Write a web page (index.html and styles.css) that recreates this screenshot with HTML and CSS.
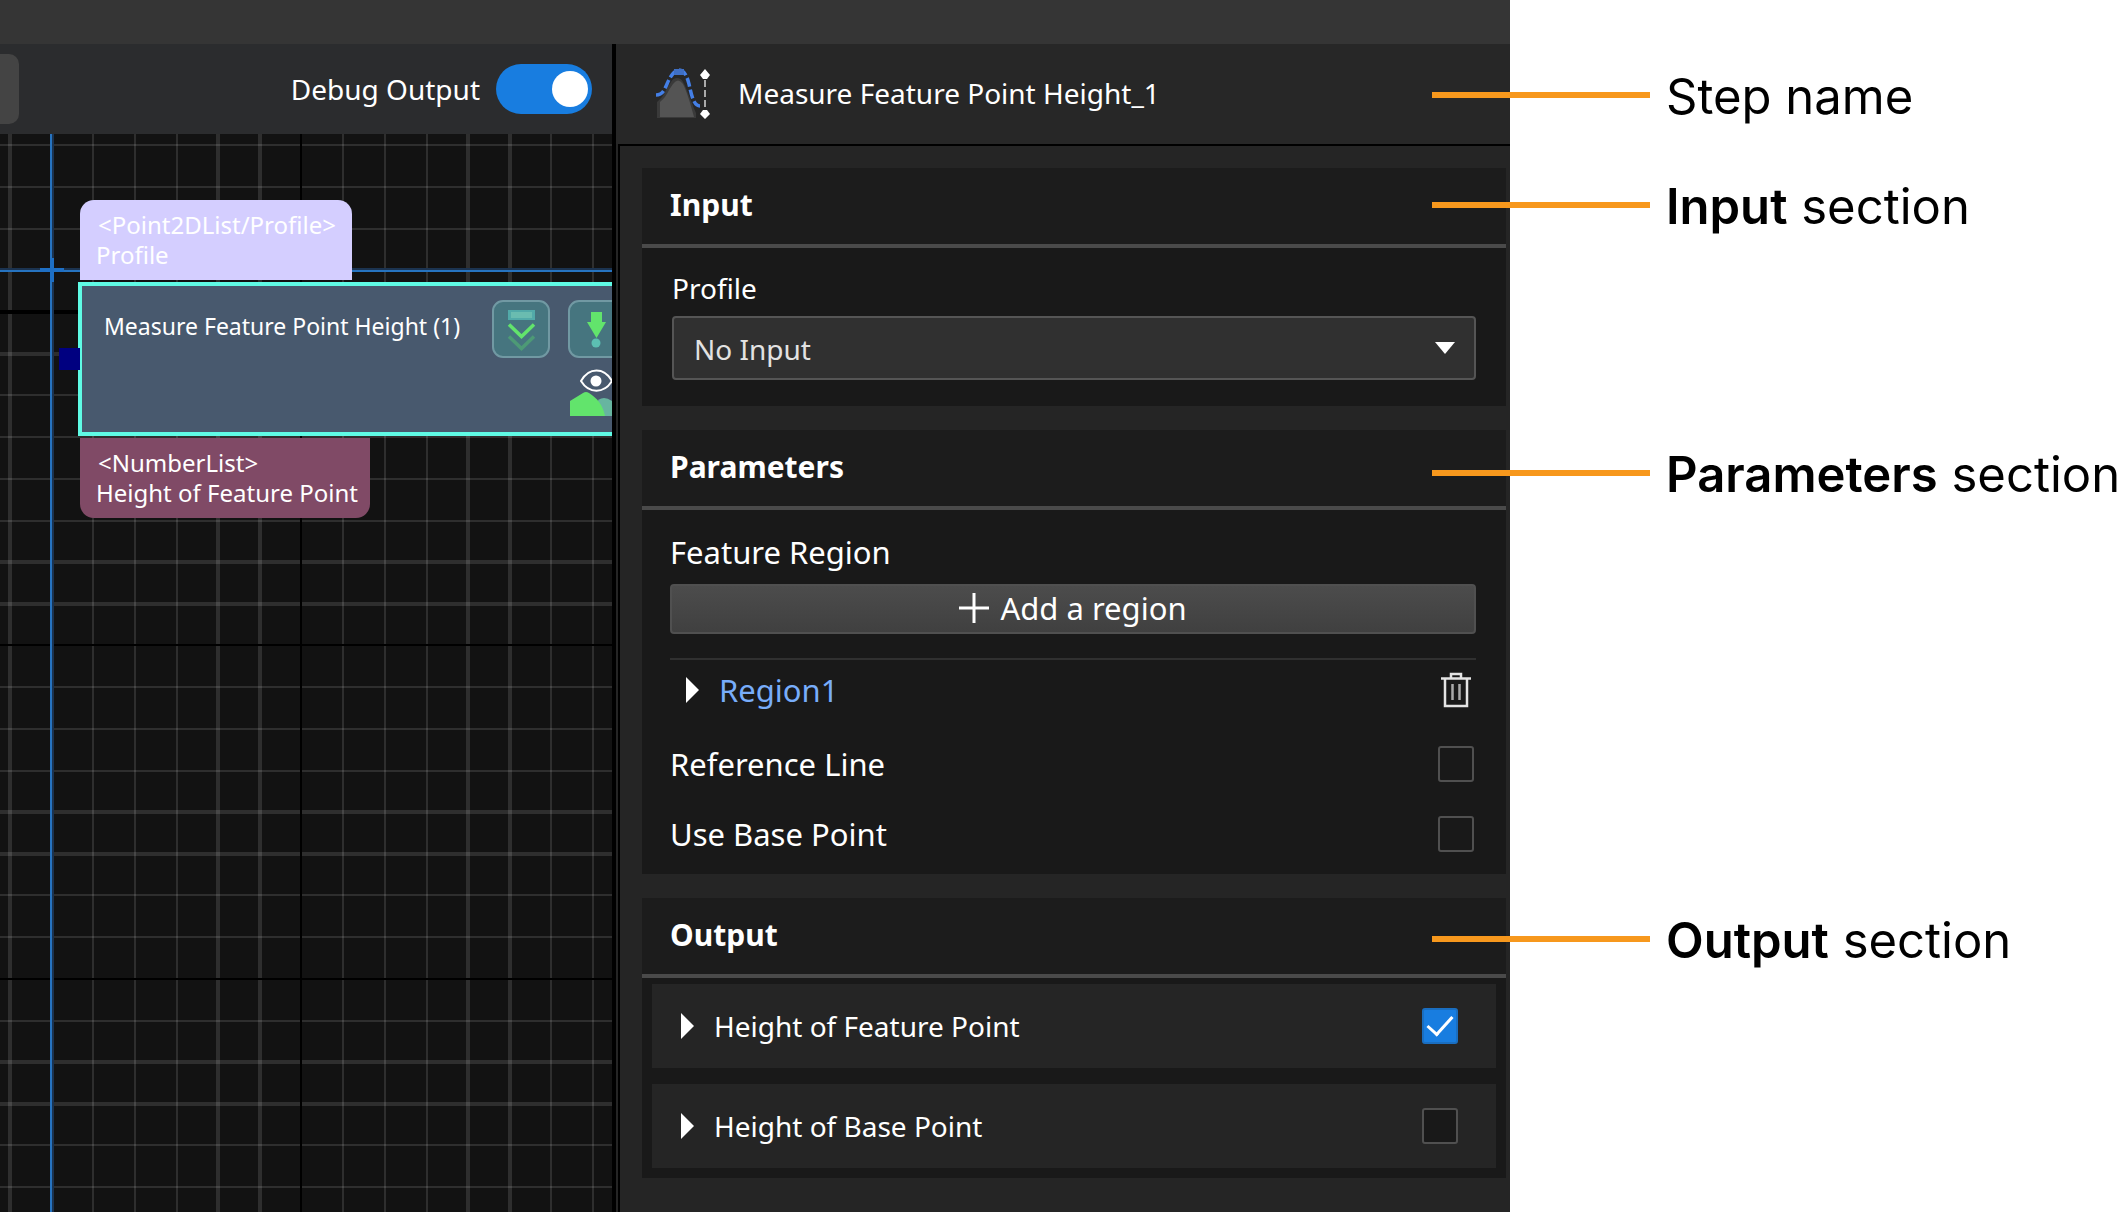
FILE: index.html
```html
<!DOCTYPE html>
<html lang="en">
<head>
<meta charset="utf-8">
<meta name="viewport" content="width=device-width, initial-scale=1">
<title>Measure Feature Point Height</title>
<link rel="stylesheet" href="styles.css">
</head>
<body>
<div class="page">
  <div class="app">
    <div class="titlebar"></div>
    <div class="workspace">
      <section class="graph">
        <div class="toolbar">
          <button class="toolbar-button" type="button" aria-label="More tools"></button>
          <label class="debug">Debug Output <input class="switch" type="checkbox" role="switch" checked></label>
        </div>
        <div class="canvas">
          <svg class="grid" width="2000" height="1600" viewBox="0 134 2000 1600" aria-hidden="true">
            <g fill="#fff" fill-opacity=".12">
              <path d="M8 134h4v1600h-4zM92 134h2v1600h-2zM134 134h2v1600h-2zM176 134h2v1600h-2zM216 134h4v1600h-4zM258 134h4v1600h-4zM342 134h2v1600h-2zM384 134h2v1600h-2zM426 134h2v1600h-2zM466 134h4v1600h-4zM508 134h4v1600h-4zM550 134h2v1600h-2zM592 134h2v1600h-2z"/>
              <path d="M0 144h2000v2H0zM0 186h2000v2H0zM0 228h2000v2H0zM0 352h2000v4H0zM0 394h2000v2H0zM0 436h2000v2H0zM0 478h2000v2H0zM0 520h2000v2H0zM0 560h2000v4H0zM0 602h2000v4H0zM0 686h2000v2H0zM0 728h2000v2H0zM0 770h2000v2H0zM0 810h2000v4H0zM0 852h2000v4H0zM0 894h2000v2H0zM0 936h2000v2H0zM0 1020h2000v2H0zM0 1060h2000v4H0zM0 1102h2000v4H0zM0 1144h2000v2H0zM0 1186h2000v2H0z"/>
            </g>
            <path d="M300 134h2v1600h-2zM0 310h2000v4H0zM0 644h2000v2H0zM0 978h2000v2H0z" fill="#000"/>
            <path d="M52 134h2v1600h-2zM0 268h2000v2H0z" fill="#1b3350"/>
            <path d="M50 134h2v1600h-2zM0 270h2000v2H0z" fill="#2673c0"/>
            <path d="M40 268h24v4H40zM50 258h4v24h-4z" fill="#1e6fc4"/>
          </svg>
          <div class="node-group">
            <div class="port port-in"><span class="port-type">&lt;Point2DList/Profile&gt;</span><span>Profile</span></div>
            <div class="node">
              <span class="node-name">Measure Feature Point Height (1)</span>
              <svg class="node-icons" width="150" height="146" viewBox="482 286 150 146" aria-hidden="true">
                <g fill="#46757f" stroke="#7199a3" stroke-width="2">
                  <rect x="493" y="301" width="56" height="56" rx="10"/>
                  <rect x="569" y="301" width="56" height="56" rx="10"/>
                </g>
                <path d="M508 310h27v10h-27z" fill="#52aaa9"/>
                <path d="M511 312h21v6h-21z" fill="#6abcb0"/>
                <path d="M509 324.500l12.500 12 12.500-12" fill="none" stroke="#62e46c" stroke-width="3.500"/>
                <path d="M509 336.500l12.500 12 12.500-12" fill="none" stroke="#4d9a76" stroke-width="3.500"/>
                <path d="M591 312h11v10h4l-9.500 16-9.500-16h4z" fill="#62e46c"/>
                <circle cx="596" cy="343" r="4.500" fill="#5cbfb2"/>
                <path d="M581 381c8-14 23-14 31 0-8 13-23 13-31 0z" fill="none" stroke="#fff" stroke-width="2"/>
                <circle cx="596" cy="381" r="5.500" fill="#fff"/>
                <path d="M596 404q2-6 8-6t14 8v10h-18z" fill="#67b5a0"/>
                <path d="M570 416v-15l13-8q3-2 6 0c8 5 14 12 16 23z" fill="#62e46c"/>
              </svg>
            </div>
            <div class="port port-out"><span class="port-type">&lt;NumberList&gt;</span><span>Height of Feature Point</span></div>
            <i class="handle"></i>
          </div>
        </div>
      </section>

      <section class="panel">
        <header class="step">
          <svg width="56" height="52" viewBox="0 0 56 52" aria-hidden="true">
            <path d="M1 50V34q6-5 9-12l5-8q2-4 6-4t6 4c4 7 7 17 13 31v5z" fill="#3a3a3a"/>
            <path d="M4 49V34q6-5 9-12l4-6q5-7 10 0c4 8 7 18 11 33z" fill="#545454"/>
            <path d="M0 27c6 0 8-4 11-11s7-14 12-14 8 6 10 14 4 22 11 22" fill="none" stroke="#447fe6" stroke-width="3.500" stroke-dasharray="9 3"/>
            <path d="M18 1h10v6H18z" fill="#3f6fc4"/>
            <path d="M49 12v29" stroke="#aaa" stroke-width="2" stroke-dasharray="7 3"/>
            <path d="M49 1l5 6-3 4h-4l-3-4zM49 51l5-5-3-4h-4l-3 4z" fill="#fff"/>
          </svg>
          <h1 class="step-name">Measure Feature Point Height_1</h1>
        </header>

        <div class="sections">
          <section class="card">
            <h2 class="card-title">Input</h2>
            <div class="card-body input-body">
              <label class="field-label" for="profile">Profile</label>
              <div class="select-wrap">
                <select class="select" id="profile"><option>No Input</option></select>
                <svg class="caret" width="20" height="12" viewBox="0 0 20 12" aria-hidden="true"><path d="M0 0h20L10 12z" fill="#fff"/></svg>
              </div>
            </div>
          </section>

          <section class="card">
            <h2 class="card-title">Parameters</h2>
            <div class="card-body params-body">
              <div class="field-label">Feature Region</div>
              <button class="add" type="button">
                <svg width="30" height="30" viewBox="0 0 30 30" aria-hidden="true"><path d="M0 15h30M15 0v30" stroke="#fff" stroke-width="3"/></svg>
                Add a region
              </button>
              <div class="region">
                <svg class="arrow" width="14" height="26" viewBox="0 0 14 26" aria-hidden="true"><path d="M1 0l13 13L1 26z" fill="#fff"/></svg>
                <a class="region-name" href="#region1">Region1</a>
                <button class="trash" type="button" aria-label="Delete Region1">
                  <svg width="32" height="36" viewBox="0 0 32 36" aria-hidden="true"><g fill="none" stroke="#e4e4e4" stroke-width="2.500"><path d="M1 6.500h30M11 6V2h10v4M5 7v27h22V7"/><path d="M12.500 12v16M19.500 12v16" stroke="#aaa"/></g></svg>
                </button>
              </div>
              <label class="check-row">Reference Line <input class="check" type="checkbox"></label>
              <label class="check-row">Use Base Point <input class="check" type="checkbox"></label>
            </div>
          </section>

          <section class="card">
            <h2 class="card-title">Output</h2>
            <div class="card-body output-body">
              <label class="output">
                <svg class="arrow" width="14" height="26" viewBox="0 0 14 26" aria-hidden="true"><path d="M1 0l13 13L1 26z" fill="#fff"/></svg>
                <span>Height of Feature Point</span>
                <input class="check" type="checkbox" checked>
              </label>
              <label class="output">
                <svg class="arrow" width="14" height="26" viewBox="0 0 14 26" aria-hidden="true"><path d="M1 0l13 13L1 26z" fill="#fff"/></svg>
                <span>Height of Base Point</span>
                <input class="check" type="checkbox">
              </label>
            </div>
          </section>
        </div>
      </section>
    </div>
  </div>

  <aside class="notes">
    <p class="note note-step"><span>Step name</span></p>
    <p class="note note-input"><span><b>Input</b> section</span></p>
    <p class="note note-params"><span><b>Parameters</b> section</span></p>
    <p class="note note-output"><span><b>Output</b> section</span></p>
  </aside>
</div>
</body>
</html>
```

FILE: styles.css
```css
* {
  box-sizing: border-box;
}

body {
  margin: 0;
  background: #fff;
  color: #fff;
  font: 28px/40px "Noto Sans", "Open Sans", sans-serif;
}

h1,
h2,
p {
  margin: 0;
}

.page {
  display: grid;
  grid-template-columns: minmax(0, 1510fr) minmax(0, 614fr);
  min-height: 100vh;
  overflow: hidden;
}

.app {
  display: flex;
  flex-direction: column;
  background: #252525;
}

.titlebar {
  height: 44px;
  background: #353535;
}

.workspace {
  flex: 1;
  display: grid;
  grid-template-columns: minmax(0, 612fr) minmax(0, 898fr);
}

/* Graph editor */

.graph {
  display: flex;
  flex-direction: column;
  background: #121212;
}

.toolbar {
  display: flex;
  align-items: center;
  justify-content: space-between;
  height: 90px;
  padding-right: 20px;
  background: #2b2c2e;
}

.toolbar-button {
  width: 19px;
  height: 70px;
  padding: 0;
  border: 0;
  border-radius: 0 10px 10px 0;
  background: #444;
}

.debug {
  display: flex;
  align-items: center;
  gap: 16px;
}

.switch {
  appearance: none;
  display: flex;
  align-items: center;
  justify-content: flex-end;
  width: 96px;
  height: 50px;
  margin: 0;
  padding-right: 4px;
  border-radius: 25px;
  background: #187de0;
}

.switch::before {
  content: "";
  width: 36px;
  height: 36px;
  border-radius: 50%;
  background: #fff;
}

.switch:not(:checked) {
  justify-content: flex-start;
  padding-left: 4px;
  background: #555;
}

.canvas {
  position: relative;
  flex: 1;
  overflow: hidden;
}

.grid {
  position: absolute;
  left: 0;
  top: 0;
}

.node-group {
  position: absolute;
  left: 78px;
  top: 66px;
  width: 680px;
  display: flex;
  flex-direction: column;
  align-items: flex-start;
  gap: 2px;
  font-size: 24px;
  white-space: nowrap;
}

.port {
  display: flex;
  flex-direction: column;
  justify-content: center;
  height: 80px;
  margin-left: 2px;
  padding: 0 16px;
  line-height: 30px;
}

.port-in {
  width: 272px;
  border-radius: 14px 14px 0 0;
  background: #d4ceff;
}

.port-out {
  width: 290px;
  border-radius: 0 0 14px 14px;
  background: #804a66;
}

.port-type {
  padding-left: 2px;
}

.node {
  display: flex;
  align-items: flex-start;
  width: 680px;
  height: 154px;
  border: 4px solid #5ffbe5;
  background: #48596e;
}

.node-name {
  width: 400px;
  padding: 20px 0 0 22px;
  font-size: 23px;
}

.node-icons {
  flex: none;
}

.handle {
  position: absolute;
  left: -19px;
  top: 148px;
  width: 21px;
  height: 22px;
  background: #000080;
}

/* Step panel */

.panel {
  display: flex;
  flex-direction: column;
  border-left: 4px solid #000;
}

.step {
  display: flex;
  align-items: center;
  gap: 26px;
  height: 100px;
  padding-left: 40px;
  background: #272727;
}

.step-name {
  padding-bottom: 2px;
  font-size: 28px;
  font-weight: 400;
}

.sections {
  flex: 1;
  display: flex;
  flex-direction: column;
  gap: 24px;
  margin-left: 2px;
  padding: 22px 4px 34px 22px;
  border-top: 2px solid #000;
  border-left: 2px solid #000;
}

.card {
  background: #191919;
}

.card-title {
  height: 80px;
  padding-left: 28px;
  border-bottom: 4px solid #4a4a4a;
  background: #1c1c1c;
  font-size: 30px;
  font-weight: 700;
  line-height: 74px;
}

.input-body {
  padding: 20px 30px 26px;
}

.field-label {
  display: block;
}

.select-wrap {
  display: grid;
  align-items: center;
  margin-top: 8px;
}

.select-wrap > * {
  grid-area: 1 / 1;
}

.select {
  appearance: none;
  width: 100%;
  height: 64px;
  padding: 2px 20px 0;
  border: 2px solid #555;
  border-radius: 4px;
  background: #303030;
  color: #e2e2e2;
  font: inherit;
}

.caret {
  justify-self: end;
  margin-right: 21px;
  pointer-events: none;
}

.params-body {
  padding: 22px 30px 5px 28px;
  font-size: 31px;
}

.add {
  display: flex;
  align-items: center;
  justify-content: center;
  gap: 11px;
  width: 100%;
  height: 50px;
  margin: 12px 0 24px;
  padding: 0 0 2px;
  border: 2px solid #505050;
  border-radius: 4px;
  background: linear-gradient(#4c4c4c, #404040);
  color: #fff;
  font: inherit;
}

.region {
  display: flex;
  align-items: center;
  height: 62px;
  margin-bottom: 9px;
  padding: 0 4px 0 15px;
  border-top: 2px solid #303030;
}

.arrow {
  flex: none;
}

.region-name {
  margin-left: 20px;
  color: #78adfa;
  text-decoration: none;
}

.trash {
  display: flex;
  margin-left: auto;
  padding: 0;
  border: 0;
  background: none;
}

.check-row {
  display: flex;
  align-items: center;
  justify-content: space-between;
  height: 70px;
  padding-right: 2px;
}

.check {
  appearance: none;
  flex: none;
  width: 36px;
  height: 36px;
  margin: 0;
  border: 2px solid #505050;
  border-radius: 3px;
  background: #191919;
}

.check:checked {
  border-color: #1a6ec0;
  background: #187de0;
}

.check:checked::before {
  content: "";
  display: block;
  width: 11px;
  height: 22px;
  margin-left: 9px;
  border: solid #fff;
  border-width: 0 3px 3px 0;
  transform: rotate(42deg);
}

.output-body {
  display: flex;
  flex-direction: column;
  gap: 16px;
  padding: 6px 10px 10px;
}

.output {
  display: flex;
  align-items: center;
  gap: 20px;
  height: 84px;
  padding: 0 38px 0 28px;
  background: #252525;
}

.output .check {
  margin-left: auto;
}

/* Callouts */

.notes {
  z-index: 1;
  margin-left: -78px;
  color: #000;
  font: 49px/56px Inter, "Noto Sans", sans-serif;
}

.note {
  display: flex;
  align-items: center;
  gap: 16px;
  white-space: nowrap;
}

.note::before {
  content: "";
  flex: none;
  width: 218px;
  height: 6px;
  margin-bottom: 4px;
  background: #f7981d;
}

.note b {
  font-weight: 600;
}

.note-step {
  margin-top: 69px;
}

.note-input {
  margin-top: 54px;
}

.note-params {
  margin-top: 212px;
}

.note-output {
  margin-top: 410px;
}
```
